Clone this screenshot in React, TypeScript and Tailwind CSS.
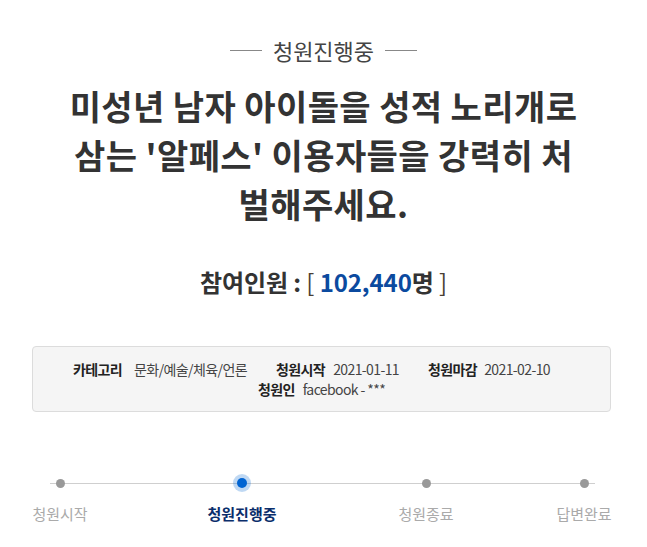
const font = { fontFamily: '"Noto Sans CJK KR", "Noto Sans", sans-serif' }

const steps = [
  { label: '청원시작', active: false, ml: 'ml-[20px]' },
  { label: '청원진행중', active: true, ml: 'ml-[102px]' },
  { label: '청원종료', active: false, ml: 'ml-[104px]' },
  { label: '답변완료', active: false, ml: 'ml-[78px]' },
]

export default function App() {
  return (
    <div className="w-[647px] h-[547px] bg-white text-[#333] overflow-hidden" style={font}>
      <div className="flex items-center justify-center gap-[11px] pt-[35px]">
        <span className="w-[32px] h-px bg-[#888]" />
        <span className="text-[22px] leading-[30px] text-[#444]">청원진행중</span>
        <span className="w-[32px] h-px bg-[#888]" />
      </div>

      <h1 className="mt-[16px] text-center text-[34px] leading-[49px] font-bold tracking-[0.4px] text-[#333]">
        <span className="block">미성년 남자 아이돌을 성적 노리개로</span>
        <span className="block">삼는 '알페스' 이용자들을 강력히 처</span>
        <span className="block">벌해주세요.</span>
      </h1>

      <div className="mt-[38px] text-center text-[24px] leading-[32px] font-bold tracking-[-0.1px]">
        <span className="text-[#333]">참여인원 : </span>
        <span className="text-[#4a3f35] font-normal">[ </span>
        <span className="text-[#0b4a9f]">102,440</span>
        <span className="text-[#333]">명</span>
        <span className="text-[#4a3f35] font-normal"> ]</span>
      </div>

      <div className="ml-[32px] mr-[36px] mt-[48px] h-[66px] bg-[#f5f5f5] border border-[#dcdcdc] rounded-[4px] flex flex-col items-center justify-center text-[14px] leading-[20px] tracking-[-0.6px] text-[#444]">
        <div className="flex gap-[29px] pr-[20px]">
          <span><b className="text-[#222] mr-[12px]">카테고리</b>문화/예술/체육/언론</span>
          <span><b className="text-[#222] mr-[8px]">청원시작</b>2021-01-11</span>
          <span><b className="text-[#222] mr-[7px]">청원마감</b>2021-02-10</span>
        </div>
        <div>
          <b className="text-[#222] mr-[8px]">청원인</b>facebook - ***
        </div>
      </div>

      <div className="relative mt-[59px] flex">
        <div className="absolute left-[50px] w-[545px] top-[12px] h-px bg-[#cfcfcf]" />
        {steps.map((s) => (
          <div key={s.label} className={`relative w-[80px] flex flex-col items-center ${s.ml}`}>
            <div className="h-[24px] flex items-center justify-center">
              {s.active ? (
                <span className="w-[18px] h-[18px] rounded-full bg-[#0064d2]/25 flex items-center justify-center">
                  <span className="w-[10px] h-[10px] rounded-full bg-[#0064d2]" />
                </span>
              ) : (
                <span className="w-[9px] h-[9px] rounded-full bg-[#999]" />
              )}
            </div>
            <span
              className={`mt-[8px] leading-[22px] whitespace-nowrap text-[15px] ${
                s.active ? 'font-bold text-[#0b2e6b]' : 'text-[#aaa]'
              }`}
            >
              {s.label}
            </span>
          </div>
        ))}
      </div>
    </div>
  )
}
